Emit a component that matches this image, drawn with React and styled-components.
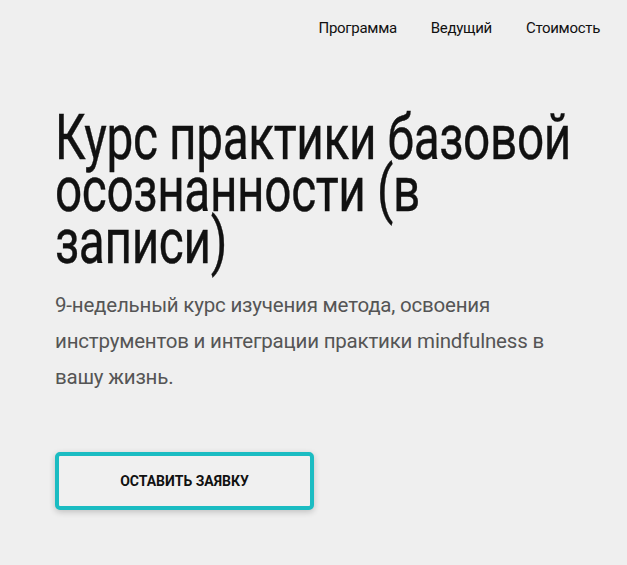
import React from "react";
import styled, { createGlobalStyle } from "styled-components";

const GlobalStyle = createGlobalStyle`
  html, body {
    margin: 0;
    padding: 0;
    background: #efefef;
    font-family: Roboto, "Liberation Sans", sans-serif;
  }
`;

const Page = styled.div`
  min-height: 565px;
  background: #efefef;
  color: #111;
  overflow: hidden;
`;

const Header = styled.header`
  display: flex;
  justify-content: flex-end;
  padding: 19px 27px 0 0;
`;

const Nav = styled.nav`
  display: flex;
  gap: 34px;
`;

const NavLink = styled.a`
  font-size: 15px;
  line-height: 18px;
  color: #111;
  text-decoration: none;
  letter-spacing: -0.3px;
`;

const Hero = styled.section`
  padding: 75px 0 0 55px;
`;

// the original face is a tall condensed grotesque; Roboto squeezed sideways
const Title = styled.h1`
  margin: 0;
  width: 700px;
  font-size: 63px;
  font-weight: 400;
  line-height: 52px;
  letter-spacing: -0.5px;
  transform: scaleX(0.758);
  transform-origin: left top;
  -webkit-text-stroke: 0.4px #111;
`;

const Lead = styled.p`
  margin: 19px 0 0;
  max-width: 500px;
  font-size: 20.5px;
  line-height: 36px;
  color: #555;
  letter-spacing: -0.2px;
`;

const Button = styled.button`
  margin-top: 57px;
  width: 259px;
  height: 58px;
  border: 4px solid #1bbcc2;
  border-radius: 5px;
  background: #f0f0f0;
  box-shadow: 0 2px 6px rgba(0, 0, 0, 0.2);
  font-family: Roboto, "Liberation Sans", sans-serif;
  font-size: 14px;
  font-weight: 700;
  color: #111;
  text-transform: uppercase;
  cursor: pointer;
`;

export default function App() {
  return (
    <Page>
      <GlobalStyle />
      <Header>
        <Nav>
          <NavLink href="#program">Программа</NavLink>
          <NavLink href="#host">Ведущий</NavLink>
          <NavLink href="#price">Стоимость</NavLink>
        </Nav>
      </Header>
      <Hero>
        <Title>Курс практики базовой осознанности (в записи)</Title>
        <Lead>
          9-недельный курс изучения метода, освоения инструментов и интеграции
          практики mindfulness в вашу жизнь.
        </Lead>
        <Button>Оставить заявку</Button>
      </Hero>
    </Page>
  );
}
